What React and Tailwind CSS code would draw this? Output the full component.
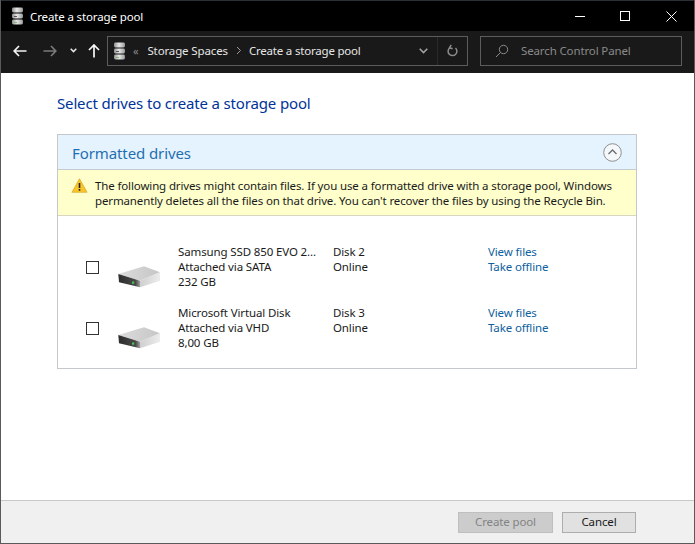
import React from "react";

function Pool({ s = 18 }) {
  return (
    <svg width={s * 0.72} height={s} viewBox="0 0 13 18">
      <defs>
        <linearGradient id="pg" x1="0" x2="1" y1="0" y2="0">
          <stop offset="0" stopColor="#8f8f8f" />
          <stop offset="0.45" stopColor="#e8e8e8" />
          <stop offset="1" stopColor="#9a9a9a" />
        </linearGradient>
      </defs>
      <rect x="1" y="0.5" width="11" height="5" rx="1.5" fill="url(#pg)" />
      <rect x="1" y="6.5" width="11" height="5" rx="1.5" fill="url(#pg)" />
      <rect x="1" y="12.5" width="11" height="5" rx="1.5" fill="url(#pg)" />
      <rect x="3" y="15" width="3" height="1" fill="#7fb86a" />
      <rect x="3" y="9" width="3" height="1" fill="#555" />
    </svg>
  );
}

function Drive() {
  return (
    <svg width="45" height="24" viewBox="0 0 45 24">
      <defs>
        <linearGradient id="dt" x1="0" x2="1" y1="0" y2="0">
          <stop offset="0" stopColor="#dcdcdc" />
          <stop offset="1" stopColor="#c6c6c6" />
        </linearGradient>
        <linearGradient id="df" x1="0" x2="1" y1="0" y2="0">
          <stop offset="0" stopColor="#2c2c2c" />
          <stop offset="0.8" stopColor="#4a4a4a" />
          <stop offset="1" stopColor="#a0a0a0" />
        </linearGradient>
        <linearGradient id="dr" x1="0" x2="1" y1="0" y2="0">
          <stop offset="0" stopColor="#cfcfcf" />
          <stop offset="1" stopColor="#ececec" />
        </linearGradient>
      </defs>
      <path d="M2.3 9L28 1.3L44 7.3L24 15.7Z" fill="url(#dt)" />
      <path d="M2.3 9L24 15.7V22.3L3 17.3Z" fill="url(#df)" />
      <path d="M24 15.7L44 7.3V15.7L24 22.3Z" fill="url(#dr)" />
      <rect x="16" y="16.5" width="2.2" height="2.2" fill="#45c84f" />
    </svg>
  );
}

function DriveRow({ name, via, size, disk }) {
  return (
    <div className="flex h-[45px] text-[#1a1a1a]">
      <div className="ml-[28px] mt-[17px] w-[13px] h-[13px] border border-[#333] bg-white shrink-0" />
      <div className="ml-[17px] mt-[21px] w-[45px] shrink-0"><Drive /></div>
      <div className="ml-[17px] w-[155px] shrink-0">
        <div>{name}</div>
        <div>{via}</div>
        <div>{size}</div>
      </div>
      <div className="w-[155px] shrink-0">
        <div>{disk}</div>
        <div>Online</div>
      </div>
      <div className="text-[#0f5f9e]">
        <div>View files</div>
        <div>Take offline</div>
      </div>
    </div>
  );
}

export default function App() {
  return (
    <div
      className="w-[695px] h-[544px] flex flex-col bg-white border-x border-[#5a5a5a] border-b text-[11.5px] leading-[15px] tracking-[-0.13px] overflow-hidden"
      style={{ fontFamily: '"Noto Sans", sans-serif' }}
    >
      <div className="h-[31px] bg-black text-white flex items-center shrink-0 border-t border-[#2b2f36]">
        <div className="ml-[10px] w-[13px] flex"><Pool /></div>
        <div className="ml-[6px]">Create a storage pool</div>
        <div className="ml-auto flex text-white">
          <svg className="mr-[35px]" width="10" height="10" viewBox="0 0 10 10"><path d="M0 5.5H10" stroke="#fff" strokeWidth="1" /></svg>
          <svg className="mr-[36px]" width="10" height="10" viewBox="0 0 10 10"><rect x="0.5" y="0.5" width="9" height="9" fill="none" stroke="#fff" /></svg>
          <svg className="mr-[17px]" width="11" height="11" viewBox="0 0 11 11"><path d="M0.5 0.5L10.5 10.5M10.5 0.5L0.5 10.5" stroke="#fff" /></svg>
        </div>
      </div>

      <div className="h-[42px] bg-[#191919] flex items-center shrink-0 pb-[3px]">
        <svg className="ml-[12px]" width="14" height="12" viewBox="0 0 14 12"><path d="M6 1L1.2 6L6 11M1.2 6H13.5" fill="none" stroke="#f2f2f2" strokeWidth="1.7" /></svg>
        <svg className="ml-[16px]" width="14" height="12" viewBox="0 0 14 12"><path d="M8 1L12.8 6L8 11M12.8 6H0.5" fill="none" stroke="#7a7a7a" strokeWidth="1.7" /></svg>
        <svg className="ml-[13px]" width="7" height="5" viewBox="0 0 7 5"><path d="M0.7 0.8L3.5 3.6L6.3 0.8" fill="none" stroke="#e8e8e8" strokeWidth="1.5" /></svg>
        <svg className="ml-[11px]" width="12" height="14" viewBox="0 0 12 14"><path d="M1 6L6 1L11 6M6 1V13.5" fill="none" stroke="#f8f8f8" strokeWidth="1.7" /></svg>
        <div className="ml-[7px] w-[361px] h-[30px] border border-[#5c5c5c] flex items-center text-[#e6e6e6]">
          <div className="ml-[5px] flex"><Pool /></div>
          <span className="ml-[7px] text-[#8a8a8a] text-[11px]">«</span>
          <span className="ml-[9px]">Storage Spaces</span>
          <svg className="ml-[8px]" width="6" height="9" viewBox="0 0 6 9"><path d="M1 1L4.5 4.5L1 8" fill="none" stroke="#9a9a9a" /></svg>
          <span className="ml-[7px] tracking-[-0.2px]">Create a storage pool</span>
          <div className="ml-auto h-full flex items-center">
            <svg className="mr-[9px]" width="9" height="6" viewBox="0 0 9 6"><path d="M0.7 0.8L4.5 4.6L8.3 0.8" fill="none" stroke="#a0a0a0" strokeWidth="1.6" /></svg>
            <div className="h-full w-[30px] border-l border-[#2a2a2a] flex items-center justify-center">
              <svg width="11" height="13" viewBox="0 0 11 13"><path d="M3 3.6A4.4 4.4 0 1 0 8.5 4M4.2 0.8L2.6 3.6L5.6 4.8" fill="none" stroke="#8c8c8c" strokeWidth="1.5" /></svg>
            </div>
          </div>
        </div>
        <div className="ml-[12px] w-[202px] h-[30px] border border-[#5c5c5c] flex items-center text-[#8a8a8a]">
          <svg className="ml-[14px]" width="14" height="14" viewBox="0 0 14 14"><circle cx="8.5" cy="5.5" r="4.2" fill="none" stroke="#8a8a8a" /><path d="M5.5 8.5L1 13" stroke="#8a8a8a" /></svg>
          <span className="ml-[12px]">Search Control Panel</span>
        </div>
      </div>

      <div className="flex-1 px-[56px] min-h-0">
        <div className="mt-[20px] text-[15px] leading-[20px] text-[#003399] tracking-[-0.15px]">Select drives to create a storage pool</div>
        <div className="mt-[21px] w-[580px] h-[235px] border border-[#c4c8cc]">
          <div className="h-[35px] bg-[#e5f3ff] border-b border-[#c4ccd2] flex items-center justify-between pl-[14px] pr-[14px]">
            <span className="text-[15px] text-[#1f6fb0] tracking-[-0.1px] pt-[2px]">Formatted drives</span>
            <svg width="19" height="19" viewBox="0 0 19 19"><circle cx="9.5" cy="9.5" r="8.8" fill="#f4f8fb" stroke="#8e8e8e" /><path d="M5.5 11L9.5 7L13.5 11" fill="none" stroke="#6d6d6d" strokeWidth="1.3" /></svg>
          </div>
          <div className="h-[46px] bg-[#ffffcc] border-b border-[#d8d8c0] flex items-center text-[#1a1a1a]">
            <svg className="ml-[13px] shrink-0 self-start mt-[8px]" width="17" height="15" viewBox="0 0 16 15">
              <path d="M8 0.7L15.6 14.3H0.4Z" fill="#f8c62c" stroke="#d09a18" strokeWidth="0.6" />
              <rect x="7.2" y="5" width="1.6" height="5" fill="#222" />
              <rect x="7.2" y="11" width="1.6" height="1.7" fill="#222" />
            </svg>
            <div className="ml-[7px] w-[530px]">
              The following drives might contain files. If you use a formatted drive with a storage pool, Windows permanently deletes all the files on that drive. You can't recover the files by using the Recycle Bin.
            </div>
          </div>
          <div className="pt-[28px] flex flex-col gap-[16px]">
            <DriveRow name="Samsung SSD 850 EVO 2..." via="Attached via SATA" size="232 GB" disk="Disk 2" />
            <DriveRow name="Microsoft Virtual Disk" via="Attached via VHD" size="8,00 GB" disk="Disk 3" />
          </div>
        </div>
      </div>

      <div className="h-[43px] bg-[#f0f0f0] border-t border-[#c8c8c8] flex items-center justify-end pr-[58px] gap-[9px] shrink-0">
        <div className="w-[95px] h-[21px] bg-[#cccccc] border border-[#bfbfbf] text-[#838383] flex items-center justify-center pb-[1px]">Create pool</div>
        <div className="w-[74px] h-[21px] bg-[#e1e1e1] border border-[#adadad] text-[#1a1a1a] flex items-center justify-center pb-[1px]">Cancel</div>
      </div>
    </div>
  );
}
